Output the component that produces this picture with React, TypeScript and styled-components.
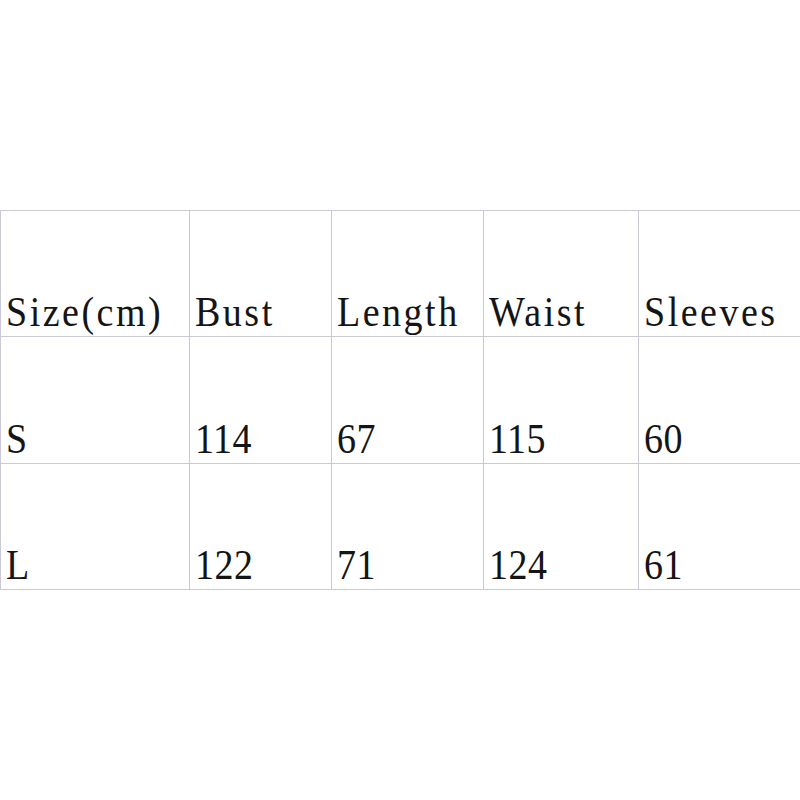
import styled, { createGlobalStyle } from "styled-components";

const Global = createGlobalStyle`
  html, body {
    margin: 0;
    padding: 0;
    background: #ffffff;
  }
`;

const Page = styled.div`
  width: 800px;
  height: 800px;
  overflow: hidden;
  padding-top: 210px;
  box-sizing: border-box;
`;

const Grid = styled.div`
  display: grid;
  grid-template-columns: 189px 142px 152px 155px 1fr;
  grid-template-rows: 126px 127px 126px;
  border-top: 1px solid #c9c9d8;
  border-left: 1px solid #c9c9d8;
  width: 800px;
  box-sizing: border-box;
`;

const Cell = styled.div<{ $last?: boolean }>`
  box-sizing: border-box;
  border-bottom: 1px solid #c9c9d8;
  border-right: ${(p) => (p.$last ? "none" : "1px solid #c9c9d8")};
  display: flex;
  align-items: flex-end;
  padding: 0 0 4px 5px;
  font-family: "Liberation Serif", serif;
  font-size: 38px;
  line-height: 1;
  color: #151515;
`;

const Text = styled.span<{ $head?: boolean }>`
  display: inline-block;
  letter-spacing: ${(p) => (p.$head ? "2.5px" : "0.5px")};
  transform: scaleY(1.1);
  transform-origin: 0 34px;
  white-space: nowrap;
`;

const rows = [
  ["Size(cm)", "Bust", "Length", "Waist", "Sleeves"],
  ["S", "114", "67", "115", "60"],
  ["L", "122", "71", "124", "61"],
];

export default function App() {
  return (
    <>
      <Global />
      <Page>
        <Grid>
          {rows.map((row, r) =>
            row.map((v, c) => (
              <Cell key={`${r}-${c}`} $last={c === row.length - 1}>
                <Text $head={r === 0}>{v}</Text>
              </Cell>
            ))
          )}
        </Grid>
      </Page>
    </>
  );
}
